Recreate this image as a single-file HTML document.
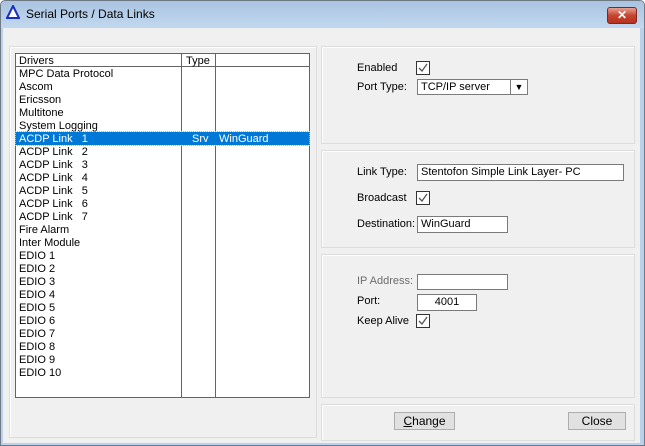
<!DOCTYPE html>
<html><head><style>
*{margin:0;padding:0;box-sizing:border-box}
body{width:645px;height:446px;overflow:hidden;background:#fff;font-family:"Liberation Sans",Arial,sans-serif;font-size:11px;color:#000;position:relative}
.a{position:absolute}
.grp{position:absolute;border:1px solid #dcdcdc;box-shadow:inset 1px 1px 0 #fff}
.lbl{position:absolute;line-height:13px;white-space:nowrap}
.box{position:absolute;background:#fff;border:1px solid #7a7a7a;line-height:14px;padding-left:3px;white-space:nowrap}
.cb{position:absolute;width:14px;height:14px;border:1px solid #333;background:#fff}
.cb svg{position:absolute;left:1px;top:1px}
.row{height:13px;line-height:13px;padding-left:3px;white-space:nowrap}
.btn{position:absolute;border:1px solid #adadad;background:#e1e1e1;text-align:center;line-height:16px;font-size:12px}
</style></head><body>
<div class="a" style="left:0;top:0;width:645px;height:446px;background:#b9d1ea;border:1px solid #6f7a85;border-radius:5px 5px 0 0"></div>
<div class="a" style="left:1px;top:1px;width:643px;height:27px;background:linear-gradient(#a9c3e0,#c2d8ef);border-radius:5px 5px 0 0"></div>
<svg class="a" style="left:6px;top:5px" width="14" height="14"><polygon points="7,1 13,13 1,13" fill="#fff" stroke="#1a2fc0" stroke-width="2"/></svg>
<div class="lbl" style="left:26px;top:8px;font-size:12px">Serial Ports / Data Links</div>
<div class="a" style="left:607px;top:7px;width:30px;height:17px;background:linear-gradient(#e7a093,#c7442f 50%,#b5321c);border:1px solid #7d2a1e;border-radius:3px;color:#fff;text-align:center;font-weight:bold;font-size:12px;line-height:15px">✕</div>
<div class="a" style="left:3px;top:28px;width:637px;height:415px;background:#f0f0f0"></div>

<div class="grp" style="left:9px;top:46px;width:308px;height:392px"></div>
<div class="a" style="left:15px;top:53px;width:295px;height:345px;background:#fff;border:1px solid #646464">
 <div class="a" style="left:0;top:0;width:293px;height:13px;border-bottom:1px solid #646464"></div>
 <div class="a" style="left:165px;top:0;width:1px;height:343px;background:#646464"></div>
 <div class="a" style="left:199px;top:0;width:1px;height:343px;background:#646464"></div>
 <div class="lbl" style="left:3px;top:1px">Drivers</div>
 <div class="lbl" style="left:170px;top:1px">Type</div>
 <div class="a" style="left:0;top:78px;width:293px;height:13px;background:#0078d7;outline:1px dotted #8fc0ef"></div>
 <div class="a" style="left:0;top:14px;width:165px">
  <div class="row">MPC Data Protocol</div><div class="row">Ascom</div><div class="row">Ericsson</div><div class="row">Multitone</div><div class="row">System Logging</div>
  <div class="row" style="color:#fff">ACDP Link &nbsp; 1</div><div class="row">ACDP Link &nbsp; 2</div><div class="row">ACDP Link &nbsp; 3</div><div class="row">ACDP Link &nbsp; 4</div><div class="row">ACDP Link &nbsp; 5</div><div class="row">ACDP Link &nbsp; 6</div><div class="row">ACDP Link &nbsp; 7</div>
  <div class="row">Fire Alarm</div><div class="row">Inter Module</div>
  <div class="row">EDIO 1</div><div class="row">EDIO 2</div><div class="row">EDIO 3</div><div class="row">EDIO 4</div><div class="row">EDIO 5</div><div class="row">EDIO 6</div><div class="row">EDIO 7</div><div class="row">EDIO 8</div><div class="row">EDIO 9</div><div class="row">EDIO 10</div>
 </div>
 <div class="lbl" style="left:176px;top:79px;color:#fff">Srv</div>
 <div class="lbl" style="left:203px;top:79px;color:#fff">WinGuard</div>
</div>

<div class="grp" style="left:321px;top:46px;width:314px;height:98px"></div>
<div class="grp" style="left:321px;top:150px;width:314px;height:98px"></div>
<div class="grp" style="left:321px;top:254px;width:314px;height:144px"></div>
<div class="grp" style="left:321px;top:404px;width:314px;height:37px"></div>

<div class="lbl" style="left:357px;top:62px">Enabled</div>
<div class="cb" style="left:416px;top:61px"><svg width="10" height="10"><path d="M1 5 L4 8 L9 1" fill="none" stroke="#555" stroke-width="1.3"/></svg></div>
<div class="lbl" style="left:357px;top:81px">Port Type:</div>
<div class="box" style="left:417px;top:79px;width:111px;height:16px">TCP/IP server</div>
<div class="a" style="left:510px;top:80px;width:17px;height:14px;border-left:1px solid #7a7a7a;background:#fff;text-align:center;font-size:9px;line-height:14px">▼</div>

<div class="lbl" style="left:357px;top:166px">Link Type:</div>
<div class="box" style="left:417px;top:164px;width:207px;height:17px">Stentofon Simple Link Layer- PC</div>
<div class="lbl" style="left:357px;top:192px">Broadcast</div>
<div class="cb" style="left:416px;top:191px"><svg width="10" height="10"><path d="M1 5 L4 8 L9 1" fill="none" stroke="#555" stroke-width="1.3"/></svg></div>
<div class="lbl" style="left:357px;top:218px">Destination:</div>
<div class="box" style="left:417px;top:216px;width:91px;height:17px">WinGuard</div>

<div class="lbl" style="left:357px;top:275px;color:#6d6d6d">IP Address:</div>
<div class="box" style="left:417px;top:274px;width:91px;height:16px"></div>
<div class="lbl" style="left:357px;top:295px">Port:</div>
<div class="box" style="left:417px;top:294px;width:60px;height:17px;text-align:center;padding:0">4001</div>
<div class="lbl" style="left:357px;top:315px">Keep Alive</div>
<div class="cb" style="left:416px;top:314px"><svg width="10" height="10"><path d="M1 5 L4 8 L9 1" fill="none" stroke="#555" stroke-width="1.3"/></svg></div>

<div class="btn" style="left:394px;top:412px;width:61px;height:18px"><u>C</u>hange</div>
<div class="btn" style="left:568px;top:412px;width:58px;height:18px">Close</div>
</body></html>
